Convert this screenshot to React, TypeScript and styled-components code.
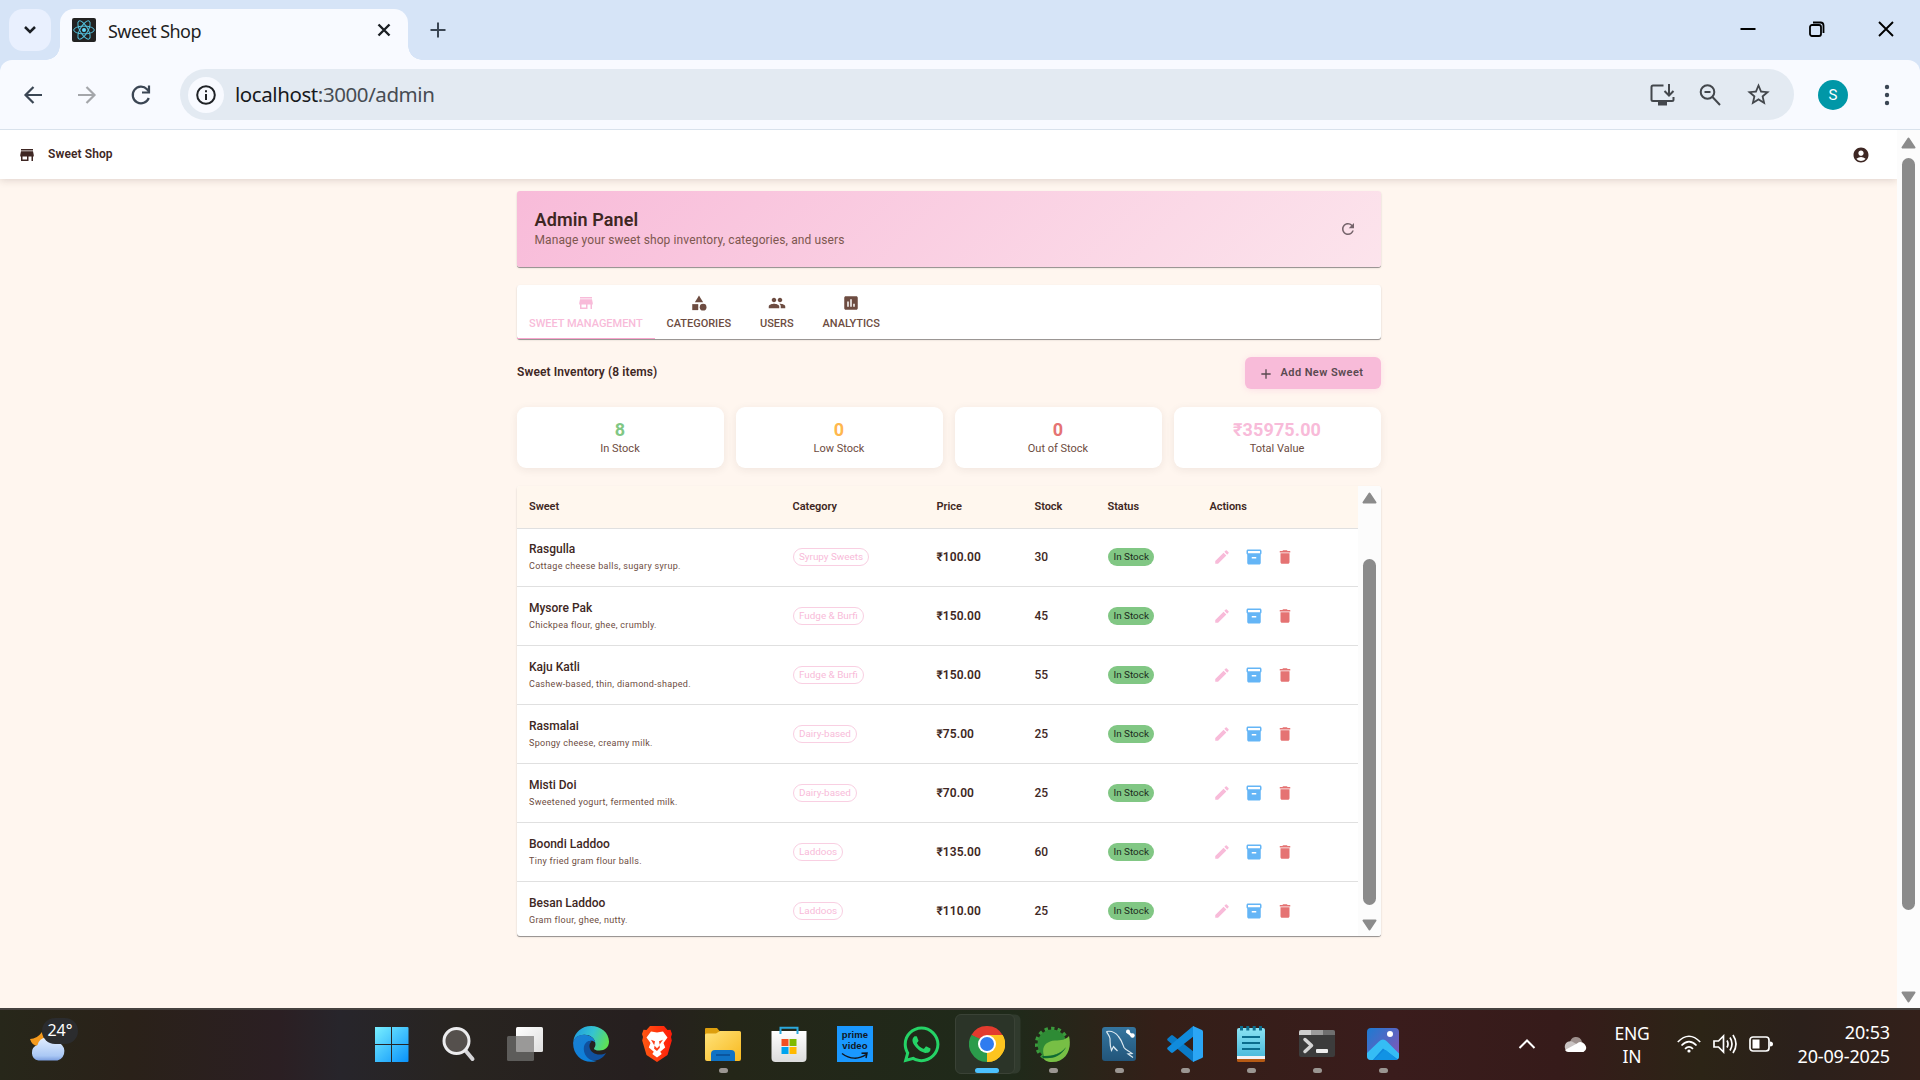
import React from 'react';
import styled, { createGlobalStyle } from 'styled-components';
import {
  MdStore, MdCategory, MdPeople, MdAssessment, MdAdd, MdEdit, MdInventory2,
  MdDelete, MdRefresh, MdAccountCircle, MdStarBorder,
} from 'react-icons/md';
import { FaWhatsapp } from 'react-icons/fa';

const ui = '"Noto Sans", "Open Sans", sans-serif';
const brown = '#3e2723';

const GlobalStyle = createGlobalStyle`
  * { box-sizing: border-box; }
  body { margin: 0; overflow: hidden; background: #fff6ef; }
  svg { display: block; flex: none; }
`;

const Screen = styled.div`
  width: 1920px;
  height: 1080px;
  display: flex;
  flex-direction: column;
  font-family: Roboto, sans-serif;
  color: ${brown};
  overflow: hidden;
`;

/* ---------- browser chrome ---------- */

const TabStrip = styled.div`
  height: 60px;
  flex: none;
  display: flex;
  align-items: flex-start;
  background: #d6e4f7;
  padding: 9px 0 0 9px;
  font-family: ${ui};
`;
const TabSearch = styled.div`
  width: 42px;
  height: 42px;
  border-radius: 14px;
  background: #e9f0fe;
  display: grid;
  place-items: center;
  margin-right: 9px;
`;
const BrowserTab = styled.div`
  position: relative;
  width: 348px;
  height: 51px;
  border-radius: 14px 14px 0 0;
  background: #f8faff;
  display: flex;
  align-items: center;
  padding: 0 17px 9px 12px;
  &::before, &::after {
    content: '';
    position: absolute;
    bottom: 0;
    width: 14px;
    height: 14px;
  }
  &::before { left: -14px; background: radial-gradient(circle at 0 0, transparent 13.5px, #f8faff 14px); }
  &::after { right: -14px; background: radial-gradient(circle at 100% 0, transparent 13.5px, #f8faff 14px); }
`;
const TabTitle = styled.span`
  flex: 1;
  margin-left: 12px;
  padding-top: 1px;
  font-size: 18px;
  letter-spacing: -0.55px;
  color: #1f1f1f;
`;
const NewTab = styled.div`
  margin: 12px 0 0 21px;
`;
const WindowButtons = styled.div`
  margin-left: auto;
  display: flex;
  gap: 51px;
  padding: 11px 25px 0 0;
`;
const ToolbarBack = styled.div`
  background: #d6e4f7;
  height: 70px;
  flex: none;
`;
const Toolbar = styled.div`
  height: 70px;
  display: flex;
  align-items: center;
  background: #f8faff;
  border-bottom: 1px solid #d9e2ec;
  border-radius: 12px 12px 0 0;
  padding: 0 23px 0 21px;
`;
const NavIcons = styled.div`
  display: flex;
  gap: 30px;
  margin-right: 27px;
`;
const Omnibox = styled.div`
  width: 1614px;
  height: 51px;
  border-radius: 26px;
  background: #e3eaf2;
  display: flex;
  align-items: center;
  padding: 0 22px 0 8px;
  font: 20.5px ${ui};
  letter-spacing: -0.42px;
  color: #474c52;
`;
const InfoBadge = styled.div`
  width: 36px;
  height: 36px;
  border-radius: 50%;
  background: #f8faff;
  display: grid;
  place-items: center;
  margin-right: 11px;
`;
const Url = styled.span`
  flex: 1;
  margin-top: -2px;
  b { font-weight: 400; color: #17191c; }
`;
const OmniIcons = styled.div`
  display: flex;
  align-items: center;
  gap: 23px;
  color: #43474c;
`;
const Avatar = styled.div`
  width: 30px;
  height: 30px;
  border-radius: 50%;
  background: #0097a7;
  color: #fff;
  font: 15px Roboto, sans-serif;
  display: grid;
  place-items: center;
  margin: 0 36px 0 24px;
`;

/* ---------- page ---------- */

const Viewport = styled.div`
  height: 878px;
  flex: none;
  display: flex;
`;
const Page = styled.div`
  width: 1897px;
  background: #fff6ef;
  overflow: hidden;
`;
const AppBar = styled.header`
  height: 49px;
  background: #fff;
  box-shadow: 0 1px 8px rgba(62, 39, 35, 0.18);
  display: flex;
  align-items: center;
  justify-content: space-between;
  padding: 1px 27px 0 18px;
`;
const Brand = styled.div`
  display: flex;
  align-items: center;
  gap: 12px;
  font-size: 12px;
  font-weight: 600;
  letter-spacing: 0.1px;
  span { margin-top: -2px; }
`;
const Container = styled.main`
  width: 864px;
  margin: 12px 0 0 517px;
`;
const paper = `
  border-radius: 3px;
  box-shadow: 0 1px 0 #9b9694, 0 1px 2px rgba(0, 0, 0, 0.18);
`;
const Hero = styled.section`
  ${paper}
  height: 76px;
  background: linear-gradient(135deg, #f8bbd9 0%, #fce4ec 100%);
  display: flex;
  align-items: center;
  justify-content: space-between;
  padding: 0 24px 0 17.5px;
`;
const HeroTitle = styled.h1`
  margin: 0;
  font-size: 18px;
  line-height: 22px;
  font-weight: 600;
  letter-spacing: 0.12px;
`;
const HeroText = styled.p`
  margin: 0;
  font-size: 12px;
  line-height: 18px;
  letter-spacing: 0.11px;
  color: #7d574f;
`;
const Tabs = styled.nav`
  ${paper}
  height: 54px;
  margin-top: 18px;
  background: #fff;
  display: flex;
`;
const Tab = styled.div<{ $active?: boolean }>`
  min-width: 67.5px;
  padding: 8.5px 12px 0;
  display: flex;
  flex-direction: column;
  align-items: center;
  gap: 5px;
  font-size: 11px;
  line-height: 13px;
  font-weight: 500;
  letter-spacing: -0.03px;
  color: ${p => (p.$active ? '#f8bbd9' : '#6d4c41')};
  border-bottom: ${p => (p.$active ? '1.5px solid #f8a5cd' : '0')};
`;
const SectionHead = styled.div`
  display: flex;
  justify-content: space-between;
  align-items: center;
  height: 32px;
  margin-top: 18px;
`;
const SectionTitle = styled.h2`
  margin: 0 0 2px;
  font-size: 12px;
  font-weight: 600;
  letter-spacing: 0.1px;
`;
const AddButton = styled.button`
  width: 136px;
  height: 32px;
  border: 0;
  border-radius: 6px;
  background: #f8bbd9;
  box-shadow: 0 1px 6px rgba(248, 187, 217, 0.4);
  display: flex;
  align-items: center;
  padding: 0 0 0 13px;
  gap: 6.5px;
  font: 600 11px Roboto, sans-serif;
  letter-spacing: 0.42px;
  color: #5a4a50;
  white-space: nowrap;
  svg { margin-top: 1px; }
  span { margin-top: -1px; }
`;
const Stats = styled.div`
  display: grid;
  grid-template-columns: repeat(4, 1fr);
  gap: 12px;
  margin-top: 18px;
`;
const StatCard = styled.div`
  height: 61px;
  border-radius: 9px;
  background: #fff;
  box-shadow: 0 2px 9px rgba(62, 39, 35, 0.08);
  text-align: center;
  padding: 12px 1px 0 0;
`;
const StatValue = styled.div<{ $color: string }>`
  font-size: 18px;
  line-height: 22px;
  font-weight: 700;
  letter-spacing: 0.12px;
  color: ${p => p.$color};
`;
const StatLabel = styled.div`
  font-size: 11px;
  line-height: 15px;
  color: #6d4c41;
`;
const TablePaper = styled.section`
  ${paper}
  height: 450px;
  margin-top: 18px;
  background: #fff;
  display: flex;
  overflow: hidden;
`;
const TableBody = styled.div`
  width: 841px;
  overflow: hidden;
`;
const columns = `
  display: grid;
  grid-template-columns: 263.5px 144px 98px 73px 102px 160.5px;
  align-items: center;
  & > * { padding-left: 12px; }
`;
const HeadRow = styled.div`
  ${columns}
  height: 43px;
  padding-top: 0;
  background: #fff7ee;
  border-bottom: 1px solid #e0e0e0;
  font-size: 11px;
  font-weight: 600;
  letter-spacing: -0.05px;
  span { margin-top: -2px; }
`;
const Row = styled.div<{ $first: boolean }>`
  ${columns}
  height: ${p => (p.$first ? 58 : 59)}px;
  padding-bottom: ${p => (p.$first ? 2 : 1)}px;
  border-bottom: 1px solid #e0e0e0;
  font-size: 12px;
`;
const Name = styled.div`
  font-size: 12px;
  line-height: 18px;
  font-weight: 500;
  margin-bottom: 1px;
`;
const Desc = styled.div`
  font-size: 9px;
  line-height: 15px;
  letter-spacing: 0.3px;
  color: #6d4c41;
`;
const Price = styled.div`
  font-weight: 600;
  letter-spacing: 0.06px;
`;
const Stock = styled.div`
  font-weight: 500;
`;
const Chip = styled.span<{ $filled?: boolean }>`
  display: inline-flex;
  align-items: center;
  height: 18px;
  border-radius: 9px;
  padding: 0 ${p => (p.$filled ? 5.5 : 5)}px;
  margin-left: 0.5px;
  border: ${p => (p.$filled ? '0' : '1px solid #f9cfe2')};
  background: ${p => (p.$filled ? '#81c784' : 'transparent')};
  color: ${p => (p.$filled ? '#1c2b1d' : '#f8bbd9')};
  font-size: 9.9px;
  vertical-align: middle;
`;
const Actions = styled.div`
  display: flex;
  gap: 13.5px;
  svg:first-child { margin-left: 3.75px; }
`;

const ScrollTrack = styled.div<{ $pad: number }>`
  width: 23px;
  flex: none;
  background: #fcfcfc;
  display: flex;
  flex-direction: column;
  align-items: center;
  padding: ${p => p.$pad}px 0 5px;
`;
const ScrollThumb = styled.div<{ $gap: number; $size: number }>`
  width: 13px;
  height: ${p => p.$size}px;
  margin: ${p => p.$gap}px 0 auto;
  border-radius: 7px;
  background: #8b8b8b;
`;

/* ---------- taskbar ---------- */

const Taskbar = styled.footer`
  height: 72px;
  flex: none;
  display: flex;
  align-items: center;
  border-top: 2px solid #46423f;
  background: linear-gradient(90deg, #27271a 0, #2a2119 130px, #2b1f23 280px, #27252b 340px, #282420 460px,
    #261f1f 640px, #242618 730px, #1f2a1a 1010px, #341f18 1160px, #3a1c1c 1390px, #361b1a 1560px,
    #2c2416 1700px, #2b201b 1800px, #33201a 1920px);
  color: #fff;
  font-family: ${ui};
`;
const Weather = styled.div`
  position: relative;
  width: 360px;
  height: 70px;
  padding: 19px 0 0 29px;
`;
const TempBadge = styled.span`
  position: absolute;
  left: 42px;
  top: 8px;
  width: 36px;
  height: 26px;
  border-radius: 13px;
  background: #2b2c2e;
  font-size: 16px;
  line-height: 24px;
  text-align: center;
`;
const Apps = styled.div`
  display: flex;
`;
const AppSlot = styled.div`
  position: relative;
  width: 66px;
  height: 70px;
  padding-top: 16px;
  display: flex;
  flex-direction: column;
  align-items: center;
  gap: 6px;
`;
const ActiveBack = styled.div`
  position: absolute;
  left: 1px;
  top: 4px;
  width: 60px;
  height: 60px;
  border-radius: 6px;
  border: 1px solid #3a4236;
  background: #2b3428;
  box-shadow: 6px 0 0 -0.5px #303a2d;
`;
const AppIcon = styled.div`
  position: relative;
  width: 36px;
  height: 36px;
`;
const Running = styled.div<{ $active?: boolean }>`
  position: relative;
  width: ${p => (p.$active ? 24 : 9)}px;
  height: 5px;
  border-radius: 3px;
  background: ${p => (p.$active ? '#4cc2ff' : '#9b9692')};
`;
const Prime = styled.div`
  width: 36px;
  height: 36px;
  background: #1a98ff;
  color: #10151e;
  font: 700 9.5px "Liberation Sans", sans-serif;
  display: flex;
  flex-direction: column;
  align-items: center;
  padding-top: 3px;
  span { line-height: 11px; letter-spacing: 0.1px; }
  svg { margin-top: 1px; }
`;
const Tray = styled.div`
  margin-left: auto;
  display: flex;
  align-items: center;
  padding: 0 30px 2px 0;
`;
const Lang = styled.div`
  width: 60px;
  margin: 0 15px;
  text-align: center;
  font-size: 17.5px;
  line-height: 23px;
  letter-spacing: -0.2px;
  padding-top: 2px;
`;
const Status = styled.div`
  display: flex;
  gap: 12px;
`;
const Clock = styled.div`
  width: 117px;
  text-align: right;
  font-size: 18px;
  line-height: 24px;
  letter-spacing: -0.15px;
`;

const sweets = [
  ['Rasgulla', 'Cottage cheese balls, sugary syrup.', 'Syrupy Sweets', '100.00', 30],
  ['Mysore Pak', 'Chickpea flour, ghee, crumbly.', 'Fudge & Burfi', '150.00', 45],
  ['Kaju Katli', 'Cashew-based, thin, diamond-shaped.', 'Fudge & Burfi', '150.00', 55],
  ['Rasmalai', 'Spongy cheese, creamy milk.', 'Dairy-based', '75.00', 25],
  ['Misti Doi', 'Sweetened yogurt, fermented milk.', 'Dairy-based', '70.00', 25],
  ['Boondi Laddoo', 'Tiny fried gram flour balls.', 'Laddoos', '135.00', 60],
  ['Besan Laddoo', 'Gram flour, ghee, nutty.', 'Laddoos', '110.00', 25],
] as const;

const stats = [
  ['8', 'In Stock', '#81c784'],
  ['0', 'Low Stock', '#ffb74d'],
  ['0', 'Out of Stock', '#e57373'],
  ['₹35975.00', 'Total Value', '#f8bbd9'],
];

const Arrow = ({ down }: { down?: boolean }) => (
  <svg width="15" height="12" viewBox="0 0 15 12">
    <path
      d={down ? 'M1.5 1.5h12L7.5 10.5z' : 'M1.5 10.5h12L7.5 1.5z'}
      fill="#8b8b8b" stroke="#8b8b8b" strokeWidth="2" strokeLinejoin="round"
    />
  </svg>
);

const ReactLogo = () => (
  <svg width="24" height="24" viewBox="0 0 24 24">
    <rect width="24" height="24" rx="2" fill="#222" />
    <g fill="none" stroke="#53c1de" strokeWidth="1">
      <ellipse cx="12" cy="12" rx="10.3" ry="3.9" />
      <ellipse cx="12" cy="12" rx="10.3" ry="3.9" transform="rotate(60 12 12)" />
      <ellipse cx="12" cy="12" rx="10.3" ry="3.9" transform="rotate(120 12 12)" />
    </g>
    <circle cx="12" cy="12" r="2" fill="#61dafb" />
  </svg>
);

const Icon = ({ children }: { children: React.ReactNode }) => (
  <svg width="36" height="36" viewBox="0 0 36 36">{children}</svg>
);

const Windows = () => (
  <svg width="36" height="36" viewBox="2 0 36 36">
    <defs>
      <linearGradient id="win" x1="0" y1="0" x2="34" y2="36" gradientUnits="userSpaceOnUse">
        <stop offset="0" stopColor="#7df3ff" /><stop offset="1" stopColor="#0a93fb" />
      </linearGradient>
    </defs>
    <path fill="url(#win)" d="M2 1h15.500v17H1V2q0-1 1-1zM18.500 1H34q1 0 1 1v16H18.500zM1 19h16.500v17H2q-1 0-1-1zM18.500 19H35v16q0 1-1 1H18.500z" style={{ transform: 'translateX(.5px)' }} />
  </svg>
);
const Search = () => (
  <Icon>
    <path d="M24 24l7.500 9" stroke="#d5d5d8" strokeWidth="4" strokeLinecap="round" />
    <circle cx="15.500" cy="15" r="12.500" fill="#55504d" stroke="#ececee" strokeWidth="3" />
  </Icon>
);
const TaskView = () => (
  <Icon>
    <defs>
      <linearGradient id="tv" x1="0" y1="0" x2="1" y2="1">
        <stop offset="0" stopColor="#fff" /><stop offset="1" stopColor="#dedede" />
      </linearGradient>
    </defs>
    <rect x="9" y="1" width="27" height="25" rx="1.500" fill="url(#tv)" />
    <rect x="0" y="10" width="27" height="25" rx="1.500" fill="#5d5c5a" />
    <path d="M9 10h17q1 0 1 1v15H10q-1 0-1-1z" fill="#9a9998" />
  </Icon>
);
const Edge = () => (
  <Icon>
    <defs>
      <linearGradient id="eg" x1="0" y1="0.300" x2="1" y2="0.600">
        <stop offset="0" stopColor="#1f9de0" /><stop offset="0.500" stopColor="#35c4d0" /><stop offset="1" stopColor="#5fe052" />
      </linearGradient>
      <linearGradient id="eb" x1="0" y1="0" x2="0.600" y2="1">
        <stop offset="0" stopColor="#1b7fd0" /><stop offset="1" stopColor="#0c80dc" />
      </linearGradient>
    </defs>
    <path d="M.3 15.500C1.500 6 9 0 18 0c10 0 18 7 18 15.500 0 6-4.500 9-9.500 9-4 0-6-1.300-5.300-2.600 1-1.500 1.400-2.600 1.200-4.200C22 12 17 8.500 11 8.800 5.500 9 1.500 12 .3 15.500z" fill="url(#eg)" />
    <path d="M.1 17C.5 12 5 8.800 11 8.800c5.500 0 10.500 3.200 11.300 7.800-3-3.500-9.300-2-10.300 4.400-1 8 5 13.500 11.500 14C12 38.500.1 31 .1 17z" fill="url(#eb)" />
    <path d="M14 15.800c-5.500 4.200-3.500 13.500 2.500 17.500 5 3.300 13 .2 16.500-6.300-7 3.600-15.500.6-16.500-6-.3-2.300.4-4.200 2-5.600-1.500-.6-3.200-.4-4.500.4z" fill="#10519f" />
  </Icon>
);
const Brave = () => (
  <Icon>
    <defs>
      <linearGradient id="br" x1="0" y1="0.600" x2="1" y2="0.500">
        <stop offset="0" stopColor="#ff5a12" /><stop offset="1" stopColor="#ff1c0a" />
      </linearGradient>
    </defs>
    <path d="M11 0h14l3.500 4 3-.3L33 8l-1 3 .8 3.500L28.500 29 18 36 7.500 29 3.200 14.500 4 11 3 8l1.500-4.300 3 .3z" fill="url(#br)" />
    <path d="M18 6.500l6-.9 4.500 5.800-4 5.600 1.700 4.500-5 4.200 1.500 2.300-4.700 3.500-4.700-3.500 1.500-2.300-5-4.200 1.700-4.500-4-5.600L12 5.600z" fill="#fff" />
    <path d="M12 13.800l4 1.500-.8 4 2.800 3 2.800-3-.8-4 4-1.500-3.500 5 .4 3L18 25l-2.900-2.200.4-3z" fill="#fb401a" />
    <path d="M15 8.500h6L18 20z" fill="#fff" />
  </Icon>
);
const Folder = () => (
  <Icon>
    <defs>
      <linearGradient id="fo" x1="0" y1="0" x2="1" y2="1">
        <stop offset="0" stopColor="#ffe37b" /><stop offset="1" stopColor="#f8b91f" />
      </linearGradient>
    </defs>
    <path d="M0 3q0-1 1-1h11l3 3.500V12H0z" fill="#dd9f0e" />
    <path d="M0 9q0-1.500 1.500-1.500H11L15 5h19.500Q36 5 36 6.500V33q0 2-2 2H2q-2 0-2-2z" fill="url(#fo)" />
    <path d="M6 35v-7q0-4 4-4h16q4 0 4 4v7z" fill="#0f72c4" />
    <path d="M11 29h14" stroke="#0a4d92" strokeWidth="1.500" />
  </Icon>
);
const Store = () => (
  <Icon>
    <defs>
      <linearGradient id="st" x1="0" y1="0" x2="0" y2="1">
        <stop offset="0" stopColor="#fff" /><stop offset="1" stopColor="#dcdcdc" />
      </linearGradient>
    </defs>
    <path d="M.5 5h35v27q0 4-4 4h-27q-4 0-4-4z" fill="url(#st)" />
    <path d="M9.500 8V1.800h17V8" fill="none" stroke="#2ba8dc" strokeWidth="2" />
    <path fill="#f25022" d="M10.500 13h7v7h-7z" /><path fill="#7fba00" d="M18.500 13h7v7h-7z" />
    <path fill="#00a4ef" d="M10.500 21h7v7h-7z" /><path fill="#ffb900" d="M18.500 21h7v7h-7z" />
  </Icon>
);
const Chrome = () => (
  <Icon>
    <path d="M18 18L2.410 9A18 18 0 0 1 33.590 9z" fill="#e33b2e" />
    <path d="M18 18L33.590 9A18 18 0 0 1 18 36z" fill="#fdc420" />
    <path d="M18 18l0 18A18 18 0 0 1 2.410 9z" fill="#2b9b4b" />
    <path d="M18 9h15.590L26 18z" fill="#e33b2e" />
    <path d="M10.200 22.500L2.410 9l9 4z" fill="#2b9b4b" />
    <path d="M33.590 9H18l9 9-1.200 4.500L18 36A18 18 0 0 0 33.590 9z" fill="#fdc420" />
    <circle cx="18" cy="18" r="9" fill="#fff" />
    <circle cx="18" cy="18" r="7" fill="#2f7cf0" />
  </Icon>
);
const Spring = () => (
  <Icon>
    <circle cx="17" cy="18" r="14.500" fill="#2e8b35" />
    <circle cx="17" cy="18" r="15.700" fill="none" stroke="#3a9a3c" strokeWidth="3.200" strokeDasharray="3.400 3.200" />
    <path d="M34 10c3 12-2 26-17 26-5 0-8-2-9.500-5C14 31 26 30 33 19c-5 8-14 11-24 11C6 21 11 15 20 14.500c6-.3 11-.5 14-4.500z" fill="#77bf45" />
    <path d="M7 30c9 .5 18-1 24-9-5 10-14 12-23 11z" fill="#0e6a33" />
  </Icon>
);
const MySql = () => (
  <Icon>
    <defs>
      <linearGradient id="my" x1="0" y1="0" x2="0" y2="1">
        <stop offset="0" stopColor="#34759f" /><stop offset="1" stopColor="#22557a" />
      </linearGradient>
    </defs>
    <rect x="1" y="1" width="34" height="34" rx="3" fill="url(#my)" />
    <path d="M5.500 5.500c5-1 9 1 12 5 3 3.500 4 7 5.500 11 1.500 2.500 5 3.500 8 6l-4 .5 5 3.500M5.500 5.500c1 2.500 3 4 3.500 7 .3 3-.5 7 1.500 12l2-4 4 4.500M12.500 20.500l2 3" fill="none" stroke="#dbe8f0" strokeWidth="1.200" />
    <path d="M26 5.500l6 5" stroke="#fff" strokeWidth="2.500" /><circle cx="27" cy="5.500" r="2" fill="#fff" /><circle cx="31.500" cy="9.500" r="2.200" fill="#fff" />
  </Icon>
);
const VsCode = () => (
  <Icon>
    <path d="M.6 12.500L4 9.500q1-.8 2 0L27 26v9.500q-1 .5-2-.4L.6 14.500q-.8-1 0-2z" fill="#0a7bc8" />
    <path d="M.6 23.500L4 26.500q1 .8 2 0L27 10V.5q-1-.5-2 .4L.6 21.500q-.8 1 0 2z" fill="#108bdc" />
    <path d="M26 0l9 4q1 .5 1 1.500v25q0 1-1 1.500l-9 4z" fill="#2ba6f5" />
  </Icon>
);
const Notepad = () => (
  <Icon>
    <defs>
      <linearGradient id="np" x1="0" y1="0" x2="0" y2="1">
        <stop offset="0" stopColor="#8be3f3" /><stop offset="1" stopColor="#4dbcdd" />
      </linearGradient>
    </defs>
    <path d="M4 30h28v4.500q0 1.500-1.500 1.500h-25Q4 36 4 34.500z" fill="#b65a14" />
    <path d="M4 28h28v5H4z" fill="#f2f2f5" />
    <path d="M4 4q0-2 2-2h24q2 0 2 2v26H4z" fill="url(#np)" />
    <path d="M9 11h18M9 17h18M9 23h18" stroke="#0b6c8d" strokeWidth="2" />
    <path d="M8.500 0v4.500M14.800 0v4.500M21.200 0v4.500M27.500 0v4.500" stroke="#0d6d8c" strokeWidth="3" />
  </Icon>
);
const Terminal = () => (
  <Icon>
    <rect y="4" width="36" height="27" rx="2" fill="#3c3c3c" />
    <path d="M2 4h10v5H0V6q0-2 2-2z" fill="#cfcfcf" /><path d="M12 4h12v5H12z" fill="#9c9c9c" />
    <path d="M24 4h10q2 0 2 2v3H24z" fill="#6f6f6f" />
    <path d="M6 13.500l6.500 6L6 25.500" fill="none" stroke="#d6d6d6" strokeWidth="3.500" strokeLinecap="round" strokeLinejoin="round" />
    <rect x="17" y="23" width="12" height="4" rx="1" fill="#eee" />
  </Icon>
);
const Photos = () => (
  <Icon>
    <defs>
      <linearGradient id="ph" x1="0" y1="0" x2="1" y2="0.800">
        <stop offset="0" stopColor="#1c7bd2" /><stop offset="1" stopColor="#7f57b8" />
      </linearGradient>
      <clipPath id="phc"><rect x="2" y="2" width="32" height="32" rx="4" /></clipPath>
    </defs>
    <g clipPath="url(#phc)">
      <path fill="url(#ph)" d="M2 2h32v32H2z" />
      <path d="M17 14l20 20v4H4z" fill="#0f86dc" />
      <path d="M0 29l14-13.500q4-4 8 0l14 14-3 4-15-11L6 36H0z" fill="#35bdf5" />
      <path d="M7 36l11-11q2-2 4 0l13 11z" fill="#1193e4" />
      <circle cx="25" cy="8" r="3" fill="#fff" />
    </g>
  </Icon>
);

const PrimeVideo = () => (
  <Prime>
    <span>prime</span>
    <span>video</span>
    <svg width="28" height="8" viewBox="0 0 28 8">
      <path d="M1 1.500c8 6 17 6 24 1M20.500 1.200l5.500-.2-1 5" fill="none" stroke="#10151e" strokeWidth="1.500" />
    </svg>
  </Prime>
);

const apps: { icon: React.ReactNode; run?: boolean; active?: boolean }[] = [
  { icon: <Windows /> }, { icon: <Search /> }, { icon: <TaskView /> }, { icon: <Edge /> }, { icon: <Brave /> },
  { icon: <Folder />, run: true }, { icon: <Store /> }, { icon: <PrimeVideo /> },
  { icon: <FaWhatsapp size={41} color="#25d366" style={{ margin: '-2.5px' }} /> },
  { icon: <Chrome />, run: true, active: true }, { icon: <Spring />, run: true }, { icon: <MySql />, run: true },
  { icon: <VsCode />, run: true }, { icon: <Notepad />, run: true }, { icon: <Terminal />, run: true },
  { icon: <Photos />, run: true },
];

const Browser = () => (
  <>
    <TabStrip>
      <TabSearch>
        <svg width="14" height="10" viewBox="0 0 14 10"><path d="M2 2l5 5 5-5" fill="none" stroke="#1b1f24" strokeWidth="2.500" /></svg>
      </TabSearch>
      <BrowserTab>
        <ReactLogo />
        <TabTitle>Sweet Shop</TabTitle>
        <svg width="14" height="14" viewBox="0 0 14 14"><path d="M1.500 1.500l11 11M12.500 1.500l-11 11" stroke="#1b1f24" strokeWidth="2.400" /></svg>
      </BrowserTab>
      <NewTab>
        <svg width="18" height="18" viewBox="0 0 18 18"><path d="M9 1.500v15M1.500 9h15" stroke="#3b4654" strokeWidth="2" /></svg>
      </NewTab>
      <WindowButtons>
        <svg width="18" height="18" viewBox="0 0 18 18"><path d="M1.500 9h15" stroke="#000" strokeWidth="2" /></svg>
        <svg width="18" height="18" viewBox="0 0 18 18" fill="none" stroke="#000" strokeWidth="1.800">
          <rect x="2" y="5" width="11" height="11" rx="2" /><path d="M5 2.500h7.500q3 0 3 3V13" />
        </svg>
        <svg width="18" height="18" viewBox="0 0 18 18"><path d="M2 2l14 14M16 2L2 16" stroke="#000" strokeWidth="1.900" /></svg>
      </WindowButtons>
    </TabStrip>
    <ToolbarBack>
      <Toolbar>
        <NavIcons>
          <svg width="24" height="24" viewBox="0 0 24 24"><path d="M21 12H5M12.500 4l-8 8 8 8" fill="none" stroke="#3b4654" strokeWidth="2.200" /></svg>
          <svg width="24" height="24" viewBox="0 0 24 24"><path d="M3 12h16M11.500 4l8 8-8 8" fill="none" stroke="#a4a6aa" strokeWidth="2.200" /></svg>
          <svg width="24" height="24" viewBox="0 0 24 24">
            <path d="M19.800 15A8.300 8.300 0 1 1 18 6.200l2 2.300" fill="none" stroke="#3b4654" strokeWidth="2.200" />
            <path d="M20 2.500v7h-7" fill="none" stroke="#3b4654" strokeWidth="2.200" />
          </svg>
        </NavIcons>
        <Omnibox>
          <InfoBadge>
            <svg width="20" height="20" viewBox="0 0 20 20">
              <circle cx="10" cy="10" r="8.800" fill="none" stroke="#1f2226" strokeWidth="2" />
              <path d="M10 9v6M10 5.200v2" stroke="#1f2226" strokeWidth="2" />
            </svg>
          </InfoBadge>
          <Url><b>localhost</b>:3000/admin</Url>
          <OmniIcons>
            <svg width="26" height="24" viewBox="0 0 26 24">
              <path d="M14.500 2.500H4q-1.500 0-1.500 1.500v12.500q0 1.500 1.500 1.500h19q1.500 0 1.500-1.500V14" fill="none" stroke="currentColor" strokeWidth="2" />
              <path d="M9 18h9v4.500H9z" fill="currentColor" />
              <path d="M20 1v11M15.500 8l4.500 4.500L24.500 8" fill="none" stroke="currentColor" strokeWidth="2" />
            </svg>
            <svg width="24" height="24" viewBox="0 0 24 24" fill="none" stroke="currentColor" strokeWidth="2">
              <circle cx="9.500" cy="9" r="6.800" /><path d="M14.500 14l7.500 8M6.500 9h6" />
            </svg>
            <MdStarBorder size={27} />
          </OmniIcons>
        </Omnibox>
        <Avatar>S</Avatar>
        <svg width="6" height="22" viewBox="0 0 6 22" fill="#3b4654"><circle cx="3" cy="3" r="2.200" /><circle cx="3" cy="11" r="2.200" /><circle cx="3" cy="19" r="2.200" /></svg>
      </Toolbar>
    </ToolbarBack>
  </>
);

const Inventory = () => (
  <TablePaper>
    <TableBody>
      <HeadRow>
        {['Sweet', 'Category', 'Price', 'Stock', 'Status', 'Actions'].map(h => <span key={h}>{h}</span>)}
      </HeadRow>
      {sweets.map(([name, desc, category, price, stock], i) => (
        <Row key={name} $first={i === 0}>
          <div><Name>{name}</Name><Desc>{desc}</Desc></div>
          <div><Chip>{category}</Chip></div>
          <Price>₹{price}</Price>
          <Stock>{stock}</Stock>
          <div><Chip $filled>In Stock</Chip></div>
          <Actions>
            <MdEdit size={18} color="#f8bbd9" />
            <MdInventory2 size={18} color="#64b5f6" />
            <MdDelete size={18} color="#e57373" />
          </Actions>
        </Row>
      ))}
    </TableBody>
    <ScrollTrack $pad={6}>
      <Arrow />
      <ScrollThumb $gap={55} $size={346} />
      <Arrow down />
    </ScrollTrack>
  </TablePaper>
);

const System = () => (
  <Taskbar>
    <Weather>
      <svg width="38" height="34" viewBox="0 0 38 34">
        <defs>
          <linearGradient id="cl" x1="0" y1="0" x2="0" y2="1">
            <stop offset="0" stopColor="#e4efff" /><stop offset="0.800" stopColor="#aac8f5" /><stop offset="1" stopColor="#7c9fe0" />
          </linearGradient>
        </defs>
        <path d="M1 10q7 0 12-7 5 10-4 14-6 0-8-7z" fill="#f59a1d" />
        <path d="M9.500 31.500a8 8 0 0 1-1-15.500 10.500 10.500 0 0 1 19-3 9.500 9.500 0 0 1 1 18.500z" fill="url(#cl)" />
      </svg>
      <TempBadge>24°</TempBadge>
    </Weather>
    <Apps>
      {apps.map((a, i) => (
        <AppSlot key={i}>
          {a.active && <ActiveBack />}
          <AppIcon>{a.icon}</AppIcon>
          {a.run && <Running $active={a.active} />}
        </AppSlot>
      ))}
    </Apps>
    <Tray>
      <svg width="18" height="12" viewBox="0 0 18 12"><path d="M1.500 10L9 2.500l7.500 7.500" fill="none" stroke="#fff" strokeWidth="2" /></svg>
      <svg width="24" height="18" viewBox="0 0 24 18" style={{ marginLeft: 27 }}>
        <path d="M7 9a6 6 0 0 1 12-2l-5 5z" fill="#9d908d" />
        <path d="M5.500 17A5.500 5.500 0 1 1 9 6.500l9 5L9 17z" fill="#c9c3c2" />
        <path d="M2 15l12-6.500q4-3 7.500.5 4 5-1 8H5.500Q3 17 2 15z" fill="#fff" />
      </svg>
      <Lang>ENG<br />IN</Lang>
      <Status>
        <svg width="24" height="20" viewBox="0 0 24 20" fill="none" stroke="#fff" strokeWidth="1.700">
          <path d="M.8 8Q12-3.500 23.200 8M4.500 11.500q7.500-7.500 15 0M8 14.800q4-4 8 0" /><circle cx="12" cy="17" r="1.600" fill="#fff" stroke="none" />
        </svg>
        <svg width="24" height="20" viewBox="0 0 24 20" fill="none" stroke="#fff" strokeWidth="1.700">
          <path d="M1 7h4.500l5-5v16l-5-5H1zM14 6.500q2 3.500 0 7M17 3.500q4 6.500 0 13M20 1q6 9 0 18" />
        </svg>
        <svg width="24" height="20" viewBox="0 0 24 20">
          <rect x="1" y="3" width="19" height="14" rx="3" fill="none" stroke="#fff" strokeWidth="1.700" />
          <path d="M3.500 5.500h7v9h-7z" fill="#fff" /><path d="M21 7.500q3 0 3 2.500t-3 2.500z" fill="#fff" />
        </svg>
      </Status>
      <Clock>20:53<br />20-09-2025</Clock>
    </Tray>
  </Taskbar>
);

export default function App() {
  return (
    <Screen>
      <GlobalStyle />
      <Browser />
      <Viewport>
        <Page>
          <AppBar>
            <Brand><MdStore size={18} /><span>Sweet Shop</span></Brand>
            <MdAccountCircle size={18} />
          </AppBar>
          <Container>
            <Hero>
              <div>
                <HeroTitle>Admin Panel</HeroTitle>
                <HeroText>Manage your sweet shop inventory, categories, and users</HeroText>
              </div>
              <MdRefresh size={18} color="#75646b" />
            </Hero>
            <Tabs>
              <Tab $active><MdStore size={18} />SWEET MANAGEMENT</Tab>
              <Tab><MdCategory size={18} />CATEGORIES</Tab>
              <Tab><MdPeople size={18} />USERS</Tab>
              <Tab><MdAssessment size={18} />ANALYTICS</Tab>
            </Tabs>
            <SectionHead>
              <SectionTitle>Sweet Inventory (8 items)</SectionTitle>
              <AddButton><MdAdd size={16} /><span>Add New Sweet</span></AddButton>
            </SectionHead>
            <Stats>
              {stats.map(([value, label, color]) => (
                <StatCard key={label}>
                  <StatValue $color={color}>{value}</StatValue>
                  <StatLabel>{label}</StatLabel>
                </StatCard>
              ))}
            </Stats>
            <Inventory />
          </Container>
        </Page>
        <ScrollTrack $pad={7}>
          <Arrow />
          <ScrollThumb $gap={9} $size={752} />
          <Arrow down />
        </ScrollTrack>
      </Viewport>
      <System />
    </Screen>
  );
}
